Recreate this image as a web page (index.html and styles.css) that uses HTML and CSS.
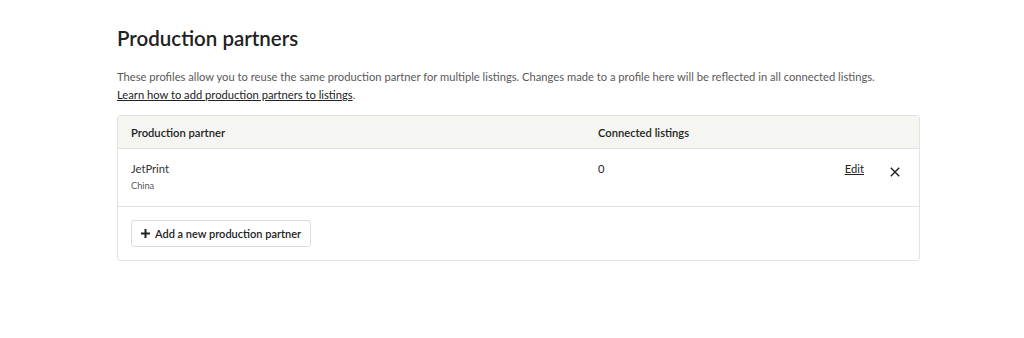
FILE: index.html
```html
<!DOCTYPE html>
<html lang="en">
<head>
  <meta charset="UTF-8">
  <title>Production partners</title>
  <link rel="stylesheet" href="styles.css">
</head>
<body>
<div class="page">
  <h1>Production partners</h1>
  <p class="intro">
    These profiles allow you to reuse the same production partner for multiple listings. Changes made to a profile here will be reflected in all connected listings.<br>
    <a href="#">Learn how to add production partners to listings</a>.
  </p>

  <div class="panel">
    <div class="row head">
      <div class="col-name">Production partner</div>
      <div class="col-count">Connected listings</div>
      <div class="col-actions"></div>
    </div>
    <div class="row partner">
      <div class="col-name">
        <div class="partner-name">JetPrint</div>
        <div class="partner-place">China</div>
      </div>
      <div class="col-count">0</div>
      <div class="col-actions">
        <a href="#" class="edit">Edit</a>
        <button class="remove" aria-label="Remove">
          <svg width="10" height="10" viewBox="0 0 10 10"><path d="M0.8 0.8l8.4 8.4M9.2 0.8l-8.4 8.4" stroke="#222" stroke-width="1.4" fill="none"/></svg>
        </button>
      </div>
    </div>
    <div class="panel-foot">
      <button class="add-btn">
        <svg width="9" height="9" viewBox="0 0 9 9"><path d="M4.5 0v9M0 4.5h9" stroke="#222" stroke-width="2" fill="none"/></svg>
        Add a new production partner
      </button>
    </div>
  </div>
</div>
</body>
</html>
```

FILE: styles.css
```css
* {
  box-sizing: border-box;
}

body {
  margin: 0;
  background: #fff;
  color: #222;
  font-family: 'Lato', 'Liberation Sans', sans-serif;
}

.page {
  width: 803px;
  margin-left: 117px;
  padding-top: 25px;
}

h1 {
  font-size: 20.5px;
  font-weight: 600;
  margin: 0 0 17px;
  line-height: 26px;
  color: #222;
}

.intro {
  font-size: 11.2px;
  line-height: 18px;
  color: #595959;
  margin: 0 0 11px;
}

.intro a {
  color: #222;
}

.panel {
  border: 1px solid #e1e3df;
  border-radius: 3px;
}

.row {
  display: flex;
  padding: 0 13px;
  border-bottom: 1px solid #e1e3df;
}

.col-name {
  width: 467px;
}

.col-count {
  flex: 1;
}

.col-actions {
  display: flex;
  align-items: flex-start;
  gap: 26px;
  padding-right: 6px;
}

.head {
  background: #f5f5f1;
  height: 33px;
  align-items: center;
  font-size: 11.2px;
  font-weight: 600;
  color: #222;
}

.partner {
  height: 58px;
  padding-top: 13px;
  font-size: 11.2px;
}

.partner-name {
  color: #333;
  line-height: 14px;
}

.partner-place {
  font-size: 9.2px;
  color: #595959;
  margin-top: 4px;
}

.edit {
  color: #222;
  font-size: 11.2px;
}

.remove {
  border: none;
  background: none;
  padding: 0;
  margin-top: 3px;
  cursor: pointer;
}

.panel-foot {
  padding: 13px 13px 13px;
}

.add-btn {
  display: flex;
  align-items: center;
  gap: 5px;
  height: 27px;
  padding: 0 9px;
  border: 1px solid #dcdcdc;
  border-radius: 3px;
  background: #fff;
  font-family: inherit;
  font-size: 11px;
  font-weight: 600;
  color: #222;
}
```
